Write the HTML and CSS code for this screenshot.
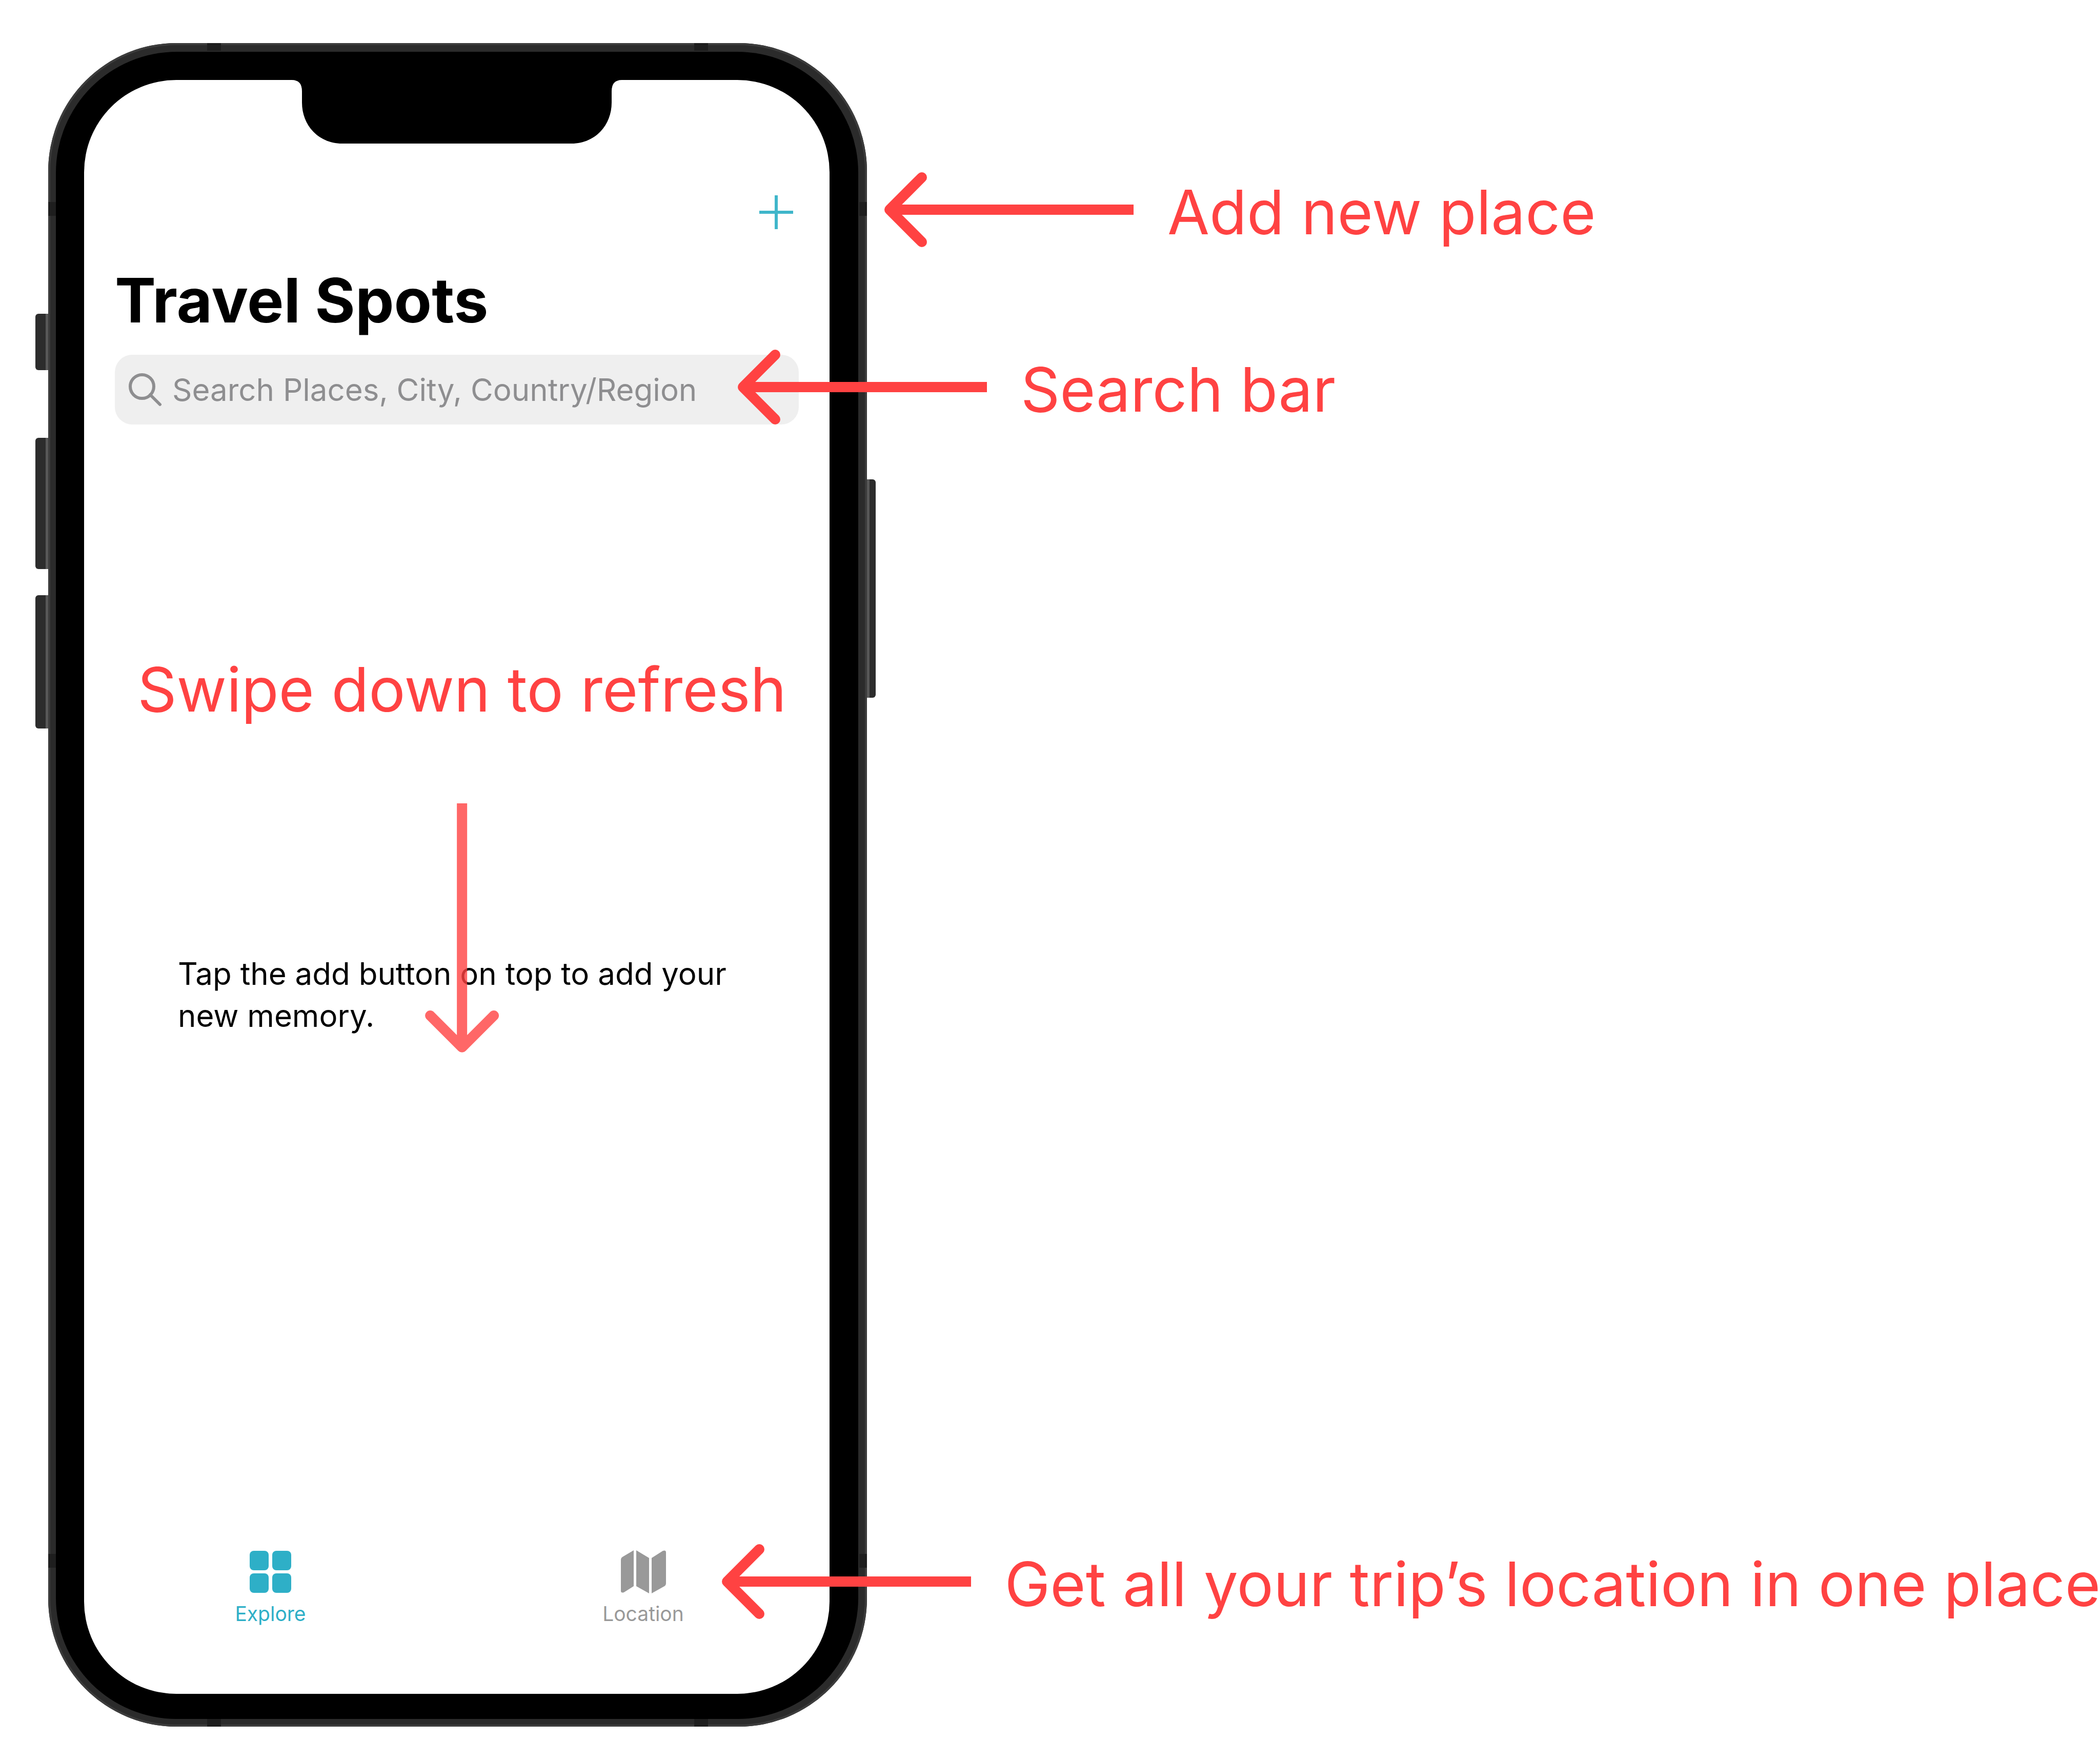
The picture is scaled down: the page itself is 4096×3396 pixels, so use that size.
FILE: index.html
```html
<!DOCTYPE html>
<html lang="en">
<head>
<meta charset="utf-8">
<meta name="viewport" content="width=device-width, initial-scale=1">
<title>Travel Spots</title>
<link rel="stylesheet" href="styles.css">
</head>
<body>
<svg class="defs" aria-hidden="true">
  <symbol id="arrow-left" viewBox="0 0 486 148">
    <path d="M73 11 10 74l63 63" fill="none" stroke="currentColor" stroke-width="20" stroke-linecap="round" stroke-linejoin="round"/>
    <path d="M10 74h476" fill="none" stroke="currentColor" stroke-width="20"/>
  </symbol>
</svg>
<main class="board">
  <section class="phone" aria-label="Phone">
    <span class="side-key side-key-mute"></span>
    <span class="side-key side-key-up"></span>
    <span class="side-key side-key-down"></span>
    <span class="side-key side-key-power"></span>
    <span class="band band-top band-start"></span>
    <span class="band band-top band-end"></span>
    <span class="band band-bottom band-start"></span>
    <span class="band band-bottom band-end"></span>
    <span class="band band-left band-upper"></span>
    <span class="band band-left band-lower"></span>
    <span class="band band-right band-upper"></span>
    <span class="band band-right band-lower"></span>
    <div class="bezel">
      <div class="screen">
        <svg class="notch" viewBox="0 0 644 124" aria-hidden="true">
          <path d="M0 0Q20 0 20 22V44C20 90 54 124 98 124H546C590 124 624 90 624 44V22Q624 0 644 0Z"/>
        </svg>
        <div class="toolbar">
          <button class="add" type="button" aria-label="Add">
            <svg viewBox="0 0 66 66" aria-hidden="true"><path d="M33 0v66M0 33h66" stroke="currentColor" stroke-width="6"/></svg>
          </button>
          <p class="callout callout-add"><svg class="arrow"><use href="#arrow-left"/></svg><span>Add new place</span></p>
        </div>
        <h1 class="title">Travel Spots</h1>
        <div class="search">
          <label class="search-icon" for="query" aria-label="Search">
            <svg viewBox="0 0 66 66" aria-hidden="true"><circle cx="27" cy="27" r="23" fill="none" stroke="currentColor" stroke-width="6"/><path d="M43 43 62 62" stroke="currentColor" stroke-width="6" stroke-linecap="round"/></svg>
          </label>
          <input id="query" class="query" type="text" placeholder="Search Places, City, Country/Region">
          <p class="callout callout-search"><svg class="arrow"><use href="#arrow-left"/></svg><span>Search bar</span></p>
        </div>
        <div class="content">
          <div class="empty">
            <p class="message">Tap the add button on top to add your new memory.</p>
            <div class="hint">
              <p class="hint-text">Swipe down to refresh</p>
              <svg class="hint-arrow" viewBox="0 0 148 486" aria-hidden="true">
                <path d="M64 0H84V452L130 406A10 10 0 0 1 144 420L81 483A10 10 0 0 1 67 483L4 420A10 10 0 0 1 18 406L64 452Z" fill="currentColor"/>
              </svg>
            </div>
          </div>
        </div>
        <nav class="tabs">
          <div class="tab-cell">
            <a class="tab tab-active" href="#explore">
              <svg class="tab-icon" viewBox="0 0 90 84" aria-hidden="true"><g fill="currentColor"><rect x="4" y="1" width="37" height="38" rx="8"/><rect x="48" y="1" width="37" height="38" rx="8"/><rect x="4" y="45" width="37" height="38" rx="8"/><rect x="48" y="45" width="37" height="38" rx="8"/></g></svg>
              <span>Explore</span>
            </a>
          </div>
          <div class="tab-cell">
            <a class="tab" href="#location">
              <svg class="tab-icon" viewBox="0 0 90 84" aria-hidden="true"><g fill="currentColor"><path d="M1 19Q1 15 4 13L26 0V70L7 82Q1 84 1 79Z"/><path d="M31 0 56 15V84L31 70Z"/><path d="M61 15 83 1Q89-1 89 4V64Q89 68 86 70L61 84Z"/></g></svg>
              <span>Location</span>
            </a>
            <p class="callout callout-location"><svg class="arrow"><use href="#arrow-left"/></svg><span>Get all your trip’s location in one place</span></p>
          </div>
        </nav>
      </div>
    </div>
  </section>
</main>
</body>
</html>
```
FILE: styles.css
```css
* {
  box-sizing: border-box;
}

body {
  margin: 0;
  background: #fff;
  color: #000;
  font-family: Inter, "Liberation Sans", sans-serif;
  overflow-x: hidden;
}

p,
h1 {
  margin: 0;
}

svg {
  display: block;
}

.defs {
  position: absolute;
  width: 0;
  height: 0;
}

.board {
  display: grid;
  grid-template-columns: minmax(0, 1597px) 1fr;
  min-height: 100vh;
  padding: 84px 0 28px 94px;
}

/* Phone body */
.phone {
  position: relative;
  display: flex;
  padding: 17px 17px 15px 15px;
  border-radius: 250px;
  background: #2b2b2b;
  box-shadow: inset 0 0 0 4px #3c3c3c;
}

.bezel {
  flex: 1;
  display: flex;
  padding: 55px 56px 49px 55px;
  border-radius: 236px;
  background: #000;
}

.screen {
  flex: 1;
  display: flex;
  flex-direction: column;
  min-width: 0;
  border-radius: 180px;
  background: #fff;
}

.side-key {
  position: absolute;
  left: -25px;
  width: 25px;
  border-right: 5px solid #585858;
  border-radius: 6px 0 0 6px;
  background: #2c2c2c;
}

.side-key-mute {
  top: 528px;
  height: 110px;
}

.side-key-up {
  top: 770px;
  height: 256px;
}

.side-key-down {
  top: 1077px;
  height: 260px;
}

.side-key-power {
  top: 851px;
  left: 100%;
  width: 17px;
  height: 426px;
  border-right: 0;
  border-left: 5px solid #585858;
  border-radius: 0 6px 6px 0;
}

.band {
  position: absolute;
  background: #1e1e1e;
}

.band-top,
.band-bottom {
  width: 27px;
  height: 15px;
}

.band-top {
  top: 0;
}

.band-bottom {
  bottom: 0;
}

.band-start {
  left: 310px;
}

.band-end {
  right: 310px;
}

.band-left,
.band-right {
  width: 15px;
  height: 27px;
}

.band-left {
  left: 0;
}

.band-right {
  right: 0;
}

.band-upper {
  top: 310px;
}

.band-lower {
  bottom: 310px;
}

.notch {
  align-self: center;
  width: 644px;
  height: 124px;
}

/* App */
.toolbar {
  position: relative;
  display: flex;
  justify-content: flex-end;
  align-items: center;
  height: 124px;
  margin: 72px 71px 0 60px;
}

.add {
  width: 66px;
  height: 66px;
  padding: 0;
  border: 0;
  background: none;
  color: #3fb6ca;
}

.title {
  margin: 35px 60px 31px;
  font-size: 120px;
  line-height: 150px;
  font-weight: 700;
}

.search {
  position: relative;
  display: flex;
  align-items: center;
  gap: 20px;
  height: 136px;
  margin: 0 60px;
  padding: 0 26px;
  border-radius: 34px;
  background: #efefef;
  color: #8e8e90;
}

.search-icon {
  flex: none;
  width: 66px;
}

.query {
  flex: 1;
  min-width: 0;
  padding: 0;
  border: 0;
  outline: 0;
  background: none;
  color: #000;
  font: inherit;
  font-size: 60px;
}

.query::placeholder {
  color: #8e8e90;
  opacity: 1;
}

.content {
  flex: 1;
  display: grid;
  align-content: center;
  padding: 28px 163px 0 183px;
}

.empty {
  position: relative;
}

.message {
  font-size: 60px;
  line-height: 82px;
}

.tabs {
  display: grid;
  grid-template-columns: 1fr 1fr;
  height: 280px;
}

.tab-cell {
  position: relative;
}

.tab {
  display: flex;
  flex-direction: column;
  align-items: center;
  gap: 18px;
  color: #999;
  font-size: 39px;
  line-height: 44px;
  text-decoration: none;
}

.tab-active {
  color: #2eafc7;
}

.tab-icon {
  width: 90px;
  height: 84px;
}

/* Annotations */
.callout {
  position: absolute;
  z-index: 1;
  top: 50%;
  display: flex;
  align-items: center;
  gap: 66px;
  color: #ff4242;
  font-size: 119px;
  line-height: 144px;
  white-space: nowrap;
  transform: translateY(-50%);
}

.arrow {
  flex: none;
  width: 486px;
  height: 148px;
  margin-bottom: 10px;
}

.callout-add {
  left: calc(100% + 178px);
}

.callout-search {
  left: calc(100% - 119px);
}

.callout-location {
  top: 66px;
  left: calc(50% + 153px);
}

.hint {
  position: absolute;
  bottom: -31px;
  left: 50%;
  display: flex;
  flex-direction: column;
  align-items: center;
  gap: 150px;
  color: #ff4242;
  font-size: 119px;
  line-height: 144px;
  white-space: nowrap;
  transform: translateX(-50%);
}

.hint-arrow {
  width: 148px;
  height: 486px;
  opacity: 0.8;
}
```
